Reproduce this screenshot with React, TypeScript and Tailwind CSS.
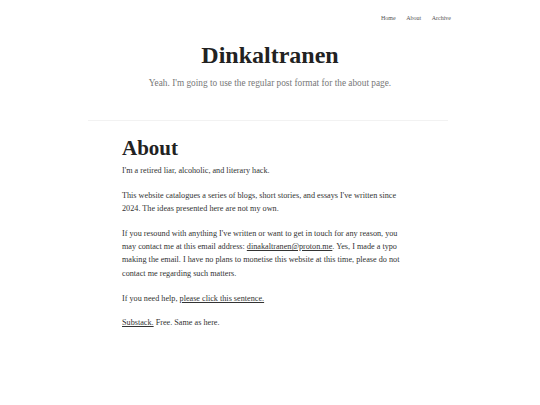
export default function App() {
  const serif = { fontFamily: '"Liberation Serif", "DejaVu Serif", serif' };
  return (
    <div className="min-h-[405px] w-full bg-white text-[#333]" style={serif}>
      <nav className="flex h-[23px] items-end justify-end gap-[10.5px] pr-[89px] text-[6px] leading-[9px] text-[#555]">
        <a>Home</a>
        <a>About</a>
        <a>Archive</a>
      </nav>
      <header className="flex flex-col items-center pt-[20px]">
        <h1 className="text-[24px] font-bold leading-[24px] text-[#222]">Dinkaltranen</h1>
        <p className="mt-[10px] text-[9.3px] leading-[12px] text-[#777]">Yeah. I'm going to use the regular post format for the about page.</p>
      </header>
      <div className="ml-[88px] mr-[92px] mt-[31px] border-t border-[#f2f2f2]" />
      <main className="ml-[122px] w-[330px] pt-[14px] text-[8.2px] leading-[13.3px] text-[#333]">
        <h2 className="mb-[3px] text-[21px] font-bold leading-[26px] text-[#222]">About</h2>
        <p className="mb-[11.5px]">I'm a retired liar, alcoholic, and literary hack.</p>
        <p className="mb-[11.5px]">
          This website catalogues a series of blogs, short stories, and essays I've written since
          <br />
          2024. The ideas presented here are not my own.
        </p>
        <p className="mb-[11.5px]">
          If you resound with anything I've written or want to get in touch for any reason, you
          <br />
          may contact me at this email address: <a className="underline">dinakaltranen@proton.me</a>. Yes, I made a typo
          <br />
          making the email. I have no plans to monetise this website at this time, please do not
          <br />
          contact me regarding such matters.
        </p>
        <p className="mb-[11.5px]">If you need help, <a className="underline">please click this sentence.</a></p>
        <p><a className="underline">Substack.</a> Free. Same as here.</p>
      </main>
    </div>
  );
}
